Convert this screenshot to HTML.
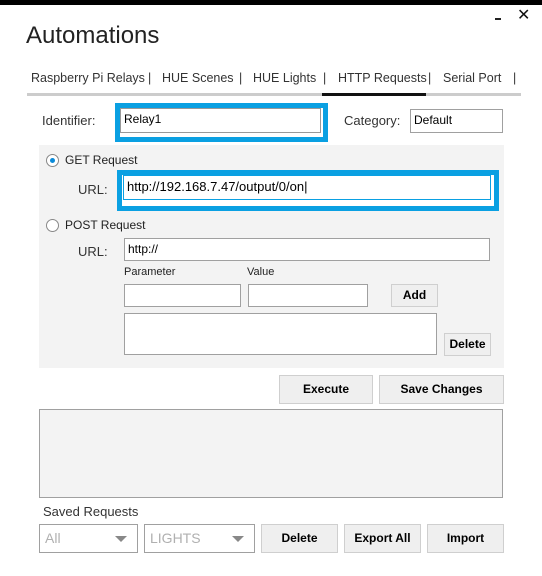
<!DOCTYPE html>
<html><head><meta charset="utf-8"><style>
*{box-sizing:border-box;margin:0;padding:0}
body{width:542px;height:576px;background:#fff;position:relative;overflow:hidden;font-family:"Liberation Sans",sans-serif;color:#000}
.a{position:absolute}
.t{position:absolute;font-size:13px;color:#333;white-space:nowrap}
.tab{position:absolute;top:71px;font-size:12.5px;color:#333;white-space:nowrap}
.in{position:absolute;background:#fff;border:1px solid #a0a0a0;font-size:12px;padding:3px 0 0 3px;color:#000}
.blue{position:absolute;border:5px solid #0aa0e2;background:#fff}
.btn{position:absolute;background:#efefef;border:1px solid #cfcfcf;font-size:12px;font-weight:bold;text-align:center;color:#000}
.rad{position:absolute;width:13px;height:13px;border:1px solid #888;border-radius:50%;background:#fff}
.cmb{position:absolute;border:1px solid #a0a0a0;background:#fff;font-size:14px;color:#b0b0b0;padding:5px 0 0 5px}
.cmb:after{content:"";position:absolute;right:10px;top:11px;border-left:6px solid transparent;border-right:6px solid transparent;border-top:6px solid #888}
</style></head><body>
<div class="a" style="left:0;top:0;width:542px;height:5px;background:#000"></div>
<div class="a" style="left:495px;top:18px;width:6px;height:2px;background:#222"></div>
<div class="t" style="left:517px;top:5px;font-size:16px;color:#111">✕</div>
<div class="t" style="left:26px;top:22px;font-size:24px;color:#222">Automations</div>
<div class="tab" style="left:31px">Raspberry Pi Relays</div>
<div class="tab" style="left:148px">|</div>
<div class="tab" style="left:162px">HUE Scenes</div>
<div class="tab" style="left:239px">|</div>
<div class="tab" style="left:253px">HUE Lights</div>
<div class="tab" style="left:323px">|</div>
<div class="tab" style="left:338px">HTTP Requests</div>
<div class="tab" style="left:428px">|</div>
<div class="tab" style="left:443px">Serial Port</div>
<div class="tab" style="left:513px">|</div>
<div class="a" style="left:27px;top:93px;width:494px;height:3px;background:#cccccc"></div>
<div class="a" style="left:322px;top:93px;width:104px;height:3px;background:#111"></div>
<div class="t" style="left:42px;top:113px">Identifier:</div>
<div class="blue" style="left:115px;top:103px;width:213px;height:39px"></div>
<div class="in" style="left:120px;top:108px;width:201px;height:25px;border-color:#999">Relay1</div>
<div class="t" style="left:344px;top:113px">Category:</div>
<div class="in" style="left:410px;top:109px;width:93px;height:24px">Default</div>
<div class="a" style="left:39px;top:145px;width:465px;height:223px;background:#f3f3f3"></div>
<div class="rad" style="left:46px;top:154px"></div>
<div class="a" style="left:50px;top:158px;width:5px;height:5px;border-radius:50%;background:#0a8ad8"></div>
<div class="t" style="left:65px;top:153px;font-size:12px;color:#222">GET Request</div>
<div class="t" style="left:78px;top:182px">URL:</div>
<div class="blue" style="left:117px;top:170px;width:382px;height:41px"></div>
<div class="in" style="left:123px;top:175px;width:368px;height:25px;border-color:#0aa0e2;font-size:13px">http://192.168.7.47/output/0/on|</div>
<div class="rad" style="left:46px;top:219px"></div>
<div class="t" style="left:65px;top:218px;font-size:12px;color:#222">POST Request</div>
<div class="t" style="left:78px;top:244px">URL:</div>
<div class="in" style="left:124px;top:238px;width:366px;height:23px">http://</div>
<div class="t" style="left:124px;top:266px;font-size:11px;color:#222">Parameter</div>
<div class="t" style="left:247px;top:266px;font-size:11px;color:#222">Value</div>
<div class="in" style="left:124px;top:284px;width:117px;height:23px"></div>
<div class="in" style="left:248px;top:284px;width:120px;height:23px"></div>
<div class="btn" style="left:391px;top:284px;width:47px;height:23px;line-height:21px">Add</div>
<div class="in" style="left:124px;top:313px;width:313px;height:42px"></div>
<div class="btn" style="left:444px;top:333px;width:47px;height:23px;line-height:21px">Delete</div>
<div class="btn" style="left:279px;top:375px;width:94px;height:29px;line-height:27px">Execute</div>
<div class="btn" style="left:379px;top:375px;width:125px;height:29px;line-height:27px">Save Changes</div>
<div class="a" style="left:39px;top:409px;width:464px;height:89px;background:#f3f3f3;border:1px solid #a0a0a0"></div>
<div class="t" style="left:43px;top:504px">Saved Requests</div>
<div class="cmb" style="left:39px;top:524px;width:99px;height:29px">All</div>
<div class="cmb" style="left:144px;top:524px;width:111px;height:29px">LIGHTS</div>
<div class="btn" style="left:261px;top:524px;width:77px;height:29px;line-height:27px">Delete</div>
<div class="btn" style="left:344px;top:524px;width:77px;height:29px;line-height:27px">Export All</div>
<div class="btn" style="left:427px;top:524px;width:77px;height:29px;line-height:27px">Import</div>
</body></html>
